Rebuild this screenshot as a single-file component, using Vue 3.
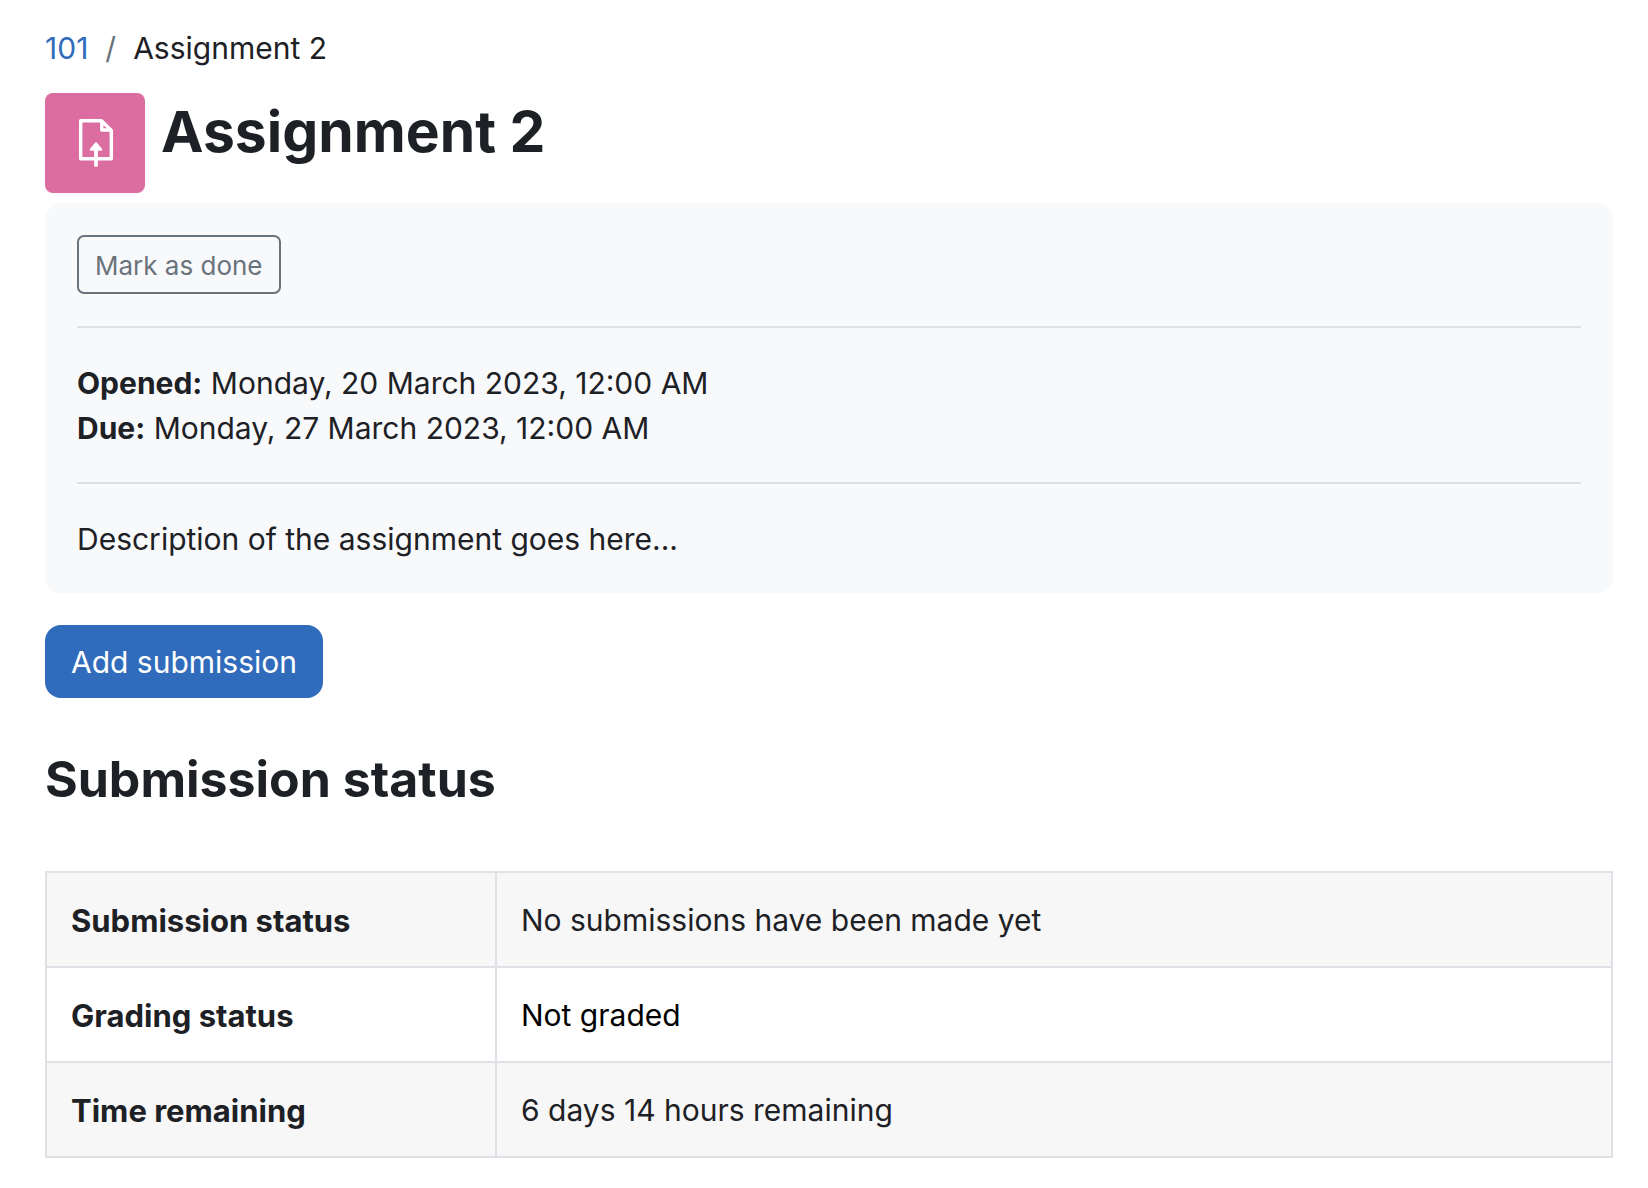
<script setup>
const dates = [
  { label: 'Opened:', value: 'Monday, 20 March 2023, 12:00 AM' },
  { label: 'Due:', value: 'Monday, 27 March 2023, 12:00 AM' },
]

const statusRows = [
  { label: 'Submission status', value: 'No submissions have been made yet' },
  { label: 'Grading status', value: 'Not graded', strong: true },
  { label: 'Time remaining', value: '6 days 14 hours remaining' },
]
</script>

<template>
  <main class="page">
    <nav aria-label="Breadcrumb">
      <ol class="breadcrumb">
        <li><a href="#">101</a></li>
        <li class="separator" aria-hidden="true">/</li>
        <li aria-current="page">Assignment 2</li>
      </ol>
    </nav>

    <header class="page-header">
      <div class="activity-icon">
        <svg viewBox="0 0 48 48" width="48" height="48" fill="none" aria-hidden="true">
          <path
            d="M25 39.700H9.700V1.700H30.500L40.300 11.500V39.700H25"
            stroke="#fff"
            stroke-width="3.400"
            stroke-linejoin="round"
          />
          <path d="M30.800 1.700V11H40.300" stroke="#fff" stroke-width="3.400" stroke-linejoin="round" />
          <path d="M25 30V46" stroke="#fff" stroke-width="3.800" stroke-linecap="round" />
          <path d="M25 24.500L30 30.500H20Z" fill="#fff" stroke="#fff" stroke-width="2.500" stroke-linejoin="round" />
        </svg>
      </div>
      <h1>Assignment 2</h1>
    </header>

    <section class="activity-info">
      <button type="button" class="btn btn-outline">Mark as done</button>
      <div class="dates">
        <div v-for="date in dates" :key="date.label">
          <strong>{{ date.label }}</strong> {{ date.value }}
        </div>
      </div>
      <p class="description">Description of the assignment goes here...</p>
    </section>

    <button type="button" class="btn btn-primary">Add submission</button>

    <h2 id="status-heading">Submission status</h2>
    <table class="status-table" aria-labelledby="status-heading">
      <tbody>
        <tr v-for="row in statusRows" :key="row.label">
          <th scope="row">{{ row.label }}</th>
          <td :class="{ dark: row.strong }">{{ row.value }}</td>
        </tr>
      </tbody>
    </table>
  </main>
</template>

<style>
body {
  margin: 0;
  background: #fff;
}
</style>

<style scoped>
.page {
  padding: 26px 35px 30px 45px;
  color: #1d2125;
  font-family: Inter, "Liberation Sans", sans-serif;
  font-size: 30px;
  line-height: 45px;
}

.breadcrumb {
  display: flex;
  gap: 17px;
  margin: 0 0 22px;
  padding: 0;
  list-style: none;
}

.breadcrumb a {
  color: #306cbb;
  text-decoration: none;
}

.separator {
  color: #6a737b;
}

.page-header {
  display: flex;
  align-items: flex-start;
  gap: 16px;
  margin-bottom: 10px;
}

.activity-icon {
  display: flex;
  align-items: center;
  justify-content: center;
  width: 100px;
  height: 100px;
  border-radius: 8px;
  background: #dc6da0;
}

h1 {
  margin: 4px 0 0;
  font-size: 57px;
  font-weight: 700;
  line-height: 70px;
}

.activity-info {
  padding: 32px 32px 31px;
  border-radius: 16px;
  background: #f8f9fb;
}

.btn {
  display: block;
  margin: 0;
  font-family: inherit;
  cursor: pointer;
}

.btn-outline {
  padding: 9px 16px 7px;
  border: 2px solid #6a737b;
  border-radius: 7px;
  background: transparent;
  color: #6a737b;
  font-size: 26px;
  line-height: 39px;
}

.btn-primary {
  margin-top: 32px;
  padding: 15px 26px 13px;
  border: 0;
  border-radius: 16px;
  background: #306cbb;
  color: #fff;
  font-size: 30px;
  line-height: 45px;
}

.dates {
  margin: 32px 0 33px;
  padding: 33px 0 31px;
  border-top: 2px solid #dee0e4;
  border-bottom: 2px solid #dee0e4;
}

.description {
  margin: 0;
}

h2 {
  margin: 51px 0 62px;
  font-size: 50px;
  font-weight: 700;
  line-height: 60px;
}

.status-table {
  width: 100%;
  border-collapse: collapse;
  table-layout: fixed;
}

.status-table th,
.status-table td {
  padding: 25px 24px 23px;
  border: 2px solid #dee2e6;
  text-align: left;
  font-weight: 400;
}

.status-table th {
  width: 400px;
  font-size: 31px;
  font-weight: 700;
}

.status-table tr:nth-child(odd) {
  background: #f7f7f7;
}

.status-table .dark {
  color: #000;
}
</style>
